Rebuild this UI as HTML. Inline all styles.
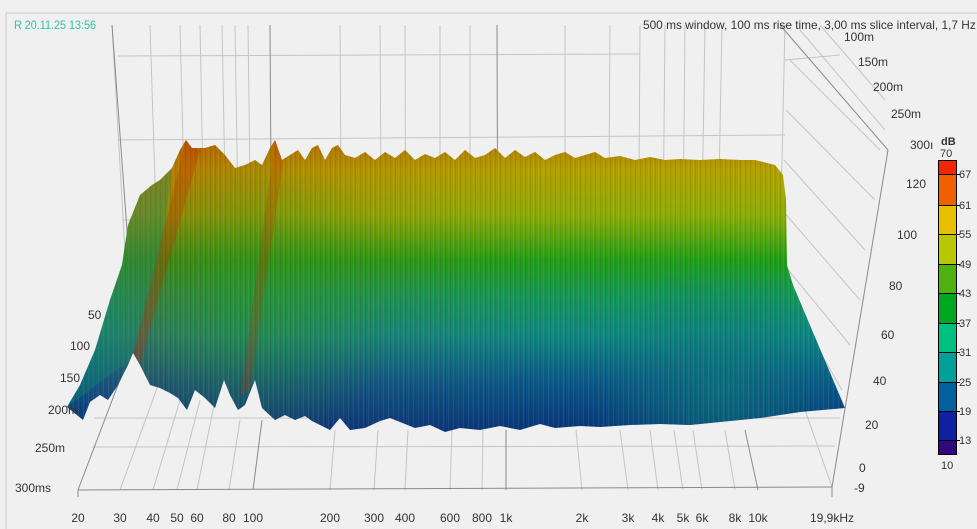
<!DOCTYPE html>
<html><head><meta charset="utf-8"><style>
html,body{margin:0;padding:0;background:#f0f0f0;}
svg{display:block;font-family:"Liberation Sans",sans-serif;}
</style></head><body>
<svg width="977" height="529" viewBox="0 0 977 529" xmlns="http://www.w3.org/2000/svg">
<defs>
<linearGradient id="v" x1="0" y1="140" x2="0" y2="440" gradientUnits="userSpaceOnUse">
<stop offset="0" stop-color="#b07a00"/>
<stop offset="0.1" stop-color="#b4a200"/>
<stop offset="0.25" stop-color="#8cae08"/>
<stop offset="0.4" stop-color="#20a018"/>
<stop offset="0.52" stop-color="#12985a"/>
<stop offset="0.65" stop-color="#0e8884"/>
<stop offset="0.8" stop-color="#0a5a8a"/>
<stop offset="1" stop-color="#08307a"/>
</linearGradient>
<linearGradient id="h" x1="60" y1="0" x2="850" y2="0" gradientUnits="userSpaceOnUse">
<stop offset="0" stop-color="#c02000" stop-opacity="0.0"/>
<stop offset="0.1" stop-color="#b83000" stop-opacity="0.4"/>
<stop offset="0.3" stop-color="#b04000" stop-opacity="0.22"/>
<stop offset="0.6" stop-color="#a06000" stop-opacity="0.05"/>
<stop offset="1" stop-color="#a06000" stop-opacity="0"/>
</linearGradient>
<linearGradient id="hv" x1="0" y1="140" x2="0" y2="440" gradientUnits="userSpaceOnUse">
<stop offset="0" stop-color="#fff" stop-opacity="1"/>
<stop offset="0.6" stop-color="#fff" stop-opacity="0.6"/>
<stop offset="1" stop-color="#fff" stop-opacity="0.2"/>
</linearGradient>
<mask id="m"><rect x="0" y="0" width="977" height="529" fill="url(#hv)"/></mask>
<radialGradient id="r" cx="720" cy="390" r="130" gradientUnits="userSpaceOnUse">
<stop offset="0" stop-color="#0f7878" stop-opacity="0.7"/>
<stop offset="1" stop-color="#0f7878" stop-opacity="0"/>
</radialGradient>
<radialGradient id="g" cx="250" cy="300" r="150" gradientUnits="userSpaceOnUse">
<stop offset="0" stop-color="#20a020" stop-opacity="0.45"/>
<stop offset="1" stop-color="#20a020" stop-opacity="0"/>
</radialGradient>
<pattern id="st" width="5" height="300" patternUnits="userSpaceOnUse">
<rect x="0" width="1" height="300" fill="#000" opacity="0.08"/>
<rect x="3" width="1" height="300" fill="#fff" opacity="0.06"/>
</pattern>
<clipPath id="c"><path d="M67,407 L80,385 L95,350 L110,300 L122,265 L128,225 L140,195 L152,185 L160,180 L172,168 L180,150 L186,140 L192,148 L205,148 L215,145 L225,155 L235,168 L245,165 L255,160 L262,165 L270,148 L275,140 L282,160 L290,155 L298,150 L305,160 L312,148 L318,145 L325,160 L332,148 L338,145 L345,155 L355,158 L365,152 L375,160 L385,152 L395,158 L405,150 L415,160 L425,154 L435,158 L445,152 L455,160 L465,150 L475,158 L485,155 L495,148 L505,158 L515,150 L525,157 L535,152 L545,160 L555,155 L565,152 L575,158 L585,155 L595,152 L605,158 L620,156 L635,160 L650,157 L665,160 L680,159 L700,160 L720,159 L740,160 L755,160 L775,165 L783,175 L786,200 L787,265 L793,285 L845,408 L800,412 L760,418 L720,422 L690,425 L660,424 L630,425 L600,427 L580,426 L555,428 L540,424 L520,430 L500,426 L480,430 L460,428 L445,432 L430,425 L415,428 L400,422 L390,418 L380,421 L365,428 L350,430 L340,418 L330,430 L312,421 L305,416 L295,420 L285,415 L275,420 L262,408 L255,380 L245,405 L238,410 L230,395 L224,380 L215,408 L205,398 L195,390 L187,410 L178,398 L170,393 L160,388 L150,385 L140,365 L133,353 L128,365 L118,385 L108,400 L100,395 L90,402 L83,420 Z"/></clipPath>
</defs>
<rect width="977" height="529" fill="#f0f0f0"/>
<line x1="6" y1="13" x2="977" y2="13" stroke="#c8c8c8"/>
<line x1="6" y1="13" x2="6" y2="529" stroke="#c8c8c8"/>
<g stroke="#c4c4c4" stroke-width="1" fill="none">
<line x1="112" y1="25" x2="130" y2="340"/>
<line x1="150" y1="25" x2="160" y2="340"/>
<line x1="180" y1="25" x2="188" y2="340"/>
<line x1="200" y1="25" x2="206" y2="340"/>
<line x1="222" y1="25" x2="228" y2="340"/>
<line x1="235" y1="25" x2="240" y2="340"/>
<line x1="248" y1="25" x2="252" y2="340"/>
<line x1="340" y1="25" x2="342" y2="340"/>
<line x1="380" y1="25" x2="382" y2="340"/>
<line x1="405" y1="25" x2="406" y2="340"/>
<line x1="440" y1="25" x2="440" y2="340"/>
<line x1="470" y1="25" x2="470" y2="340"/>
<line x1="565" y1="25" x2="565" y2="340"/>
<line x1="610" y1="25" x2="608" y2="340"/>
<line x1="640" y1="25" x2="638" y2="340"/>
<line x1="665" y1="25" x2="662" y2="340"/>
<line x1="685" y1="25" x2="682" y2="340"/>
<line x1="705" y1="25" x2="700" y2="340"/>
<line x1="722" y1="25" x2="716" y2="340"/>
<line x1="118" y1="56" x2="640" y2="54"/>
<line x1="118" y1="140" x2="785" y2="135"/>
<line x1="122" y1="220" x2="782" y2="215"/>
<line x1="125" y1="298" x2="778" y2="293"/>
<line x1="785" y1="25" x2="778" y2="340"/>
<line x1="785" y1="60" x2="840" y2="55"/>
<line x1="790" y1="60" x2="880" y2="150"/>
<line x1="786" y1="110" x2="875" y2="200"/>
<line x1="784" y1="160" x2="865" y2="250"/>
<line x1="782" y1="210" x2="860" y2="300"/>
<line x1="780" y1="260" x2="850" y2="345"/>
<line x1="790" y1="300" x2="842" y2="390"/>
<line x1="800" y1="30" x2="885" y2="130"/>
<line x1="820" y1="25" x2="885" y2="100"/>
<line x1="94" y1="418" x2="840" y2="418"/>
<line x1="92" y1="447" x2="835" y2="446"/>
<line x1="120" y1="490" x2="160" y2="380"/>
<line x1="153" y1="490" x2="180" y2="400"/>
<line x1="177" y1="490" x2="200" y2="400"/>
<line x1="197" y1="490" x2="215" y2="400"/>
<line x1="229" y1="490" x2="240" y2="420"/>
<line x1="330" y1="490" x2="335" y2="430"/>
<line x1="374" y1="490" x2="378" y2="430"/>
<line x1="405" y1="490" x2="408" y2="430"/>
<line x1="450" y1="490" x2="452" y2="430"/>
<line x1="482" y1="490" x2="483" y2="430"/>
<line x1="582" y1="490" x2="576" y2="430"/>
<line x1="628" y1="490" x2="620" y2="430"/>
<line x1="658" y1="490" x2="650" y2="430"/>
<line x1="683" y1="490" x2="674" y2="430"/>
<line x1="702" y1="490" x2="693" y2="430"/>
<line x1="735" y1="490" x2="725" y2="430"/>
<line x1="805" y1="410" x2="832" y2="487"/>
</g>
<g stroke="#8a8a8a" stroke-width="1" fill="none">
<line x1="112" y1="25" x2="135" y2="340"/>
<line x1="270" y1="25" x2="272" y2="340"/>
<line x1="497" y1="25" x2="498" y2="340"/>
<line x1="78" y1="490" x2="135" y2="340"/>
<line x1="78" y1="490" x2="832" y2="487"/>
<line x1="253" y1="490" x2="262" y2="420"/>
<line x1="506" y1="490" x2="506" y2="430"/>
<line x1="758" y1="490" x2="745" y2="430"/>
<line x1="780" y1="25" x2="888" y2="150"/>
<line x1="888" y1="150" x2="832" y2="487"/>
<line x1="832" y1="487" x2="832" y2="497"/>
<line x1="78" y1="490" x2="78" y2="497"/>
</g>
<g clip-path="url(#c)">
<rect x="50" y="130" width="810" height="320" fill="url(#v)"/>
<rect x="50" y="130" width="810" height="320" fill="url(#h)" mask="url(#m)"/>
<rect x="50" y="130" width="810" height="320" fill="url(#r)"/>
<rect x="50" y="130" width="810" height="320" fill="url(#g)"/>
<rect x="50" y="130" width="810" height="320" fill="url(#st)"/>
<path d="M67,407 L128,225 L140,195 L172,168 L160,260 L130,360 Z" fill="#10906a" opacity="0.35"/>
<path d="M186,140 L200,150 L140,365 L133,353 Z" fill="#c03000" opacity="0.3"/>
<path d="M275,140 L285,150 L250,390 L240,395 Z" fill="#c03000" opacity="0.25"/>
</g>
<g font-size="12" fill="#333">
<text x="643" y="29" textLength="340" lengthAdjust="spacingAndGlyphs">500 ms window, 100 ms rise time, 3,00 ms slice interval, 1,7 Hz r</text>
<text x="14" y="29" fill="#2ec4a0" textLength="82" lengthAdjust="spacingAndGlyphs">R 20.11.25 13:56</text>
<text x="844" y="41">100m</text>
<text x="858" y="66">150m</text>
<text x="873" y="91">200m</text>
<text x="891" y="118">250m</text>
<text x="910" y="149">300ı</text>
<text x="906" y="188">120</text>
<text x="897" y="239">100</text>
<text x="889" y="290">80</text>
<text x="881" y="339">60</text>
<text x="873" y="385">40</text>
<text x="865" y="429">20</text>
<text x="859" y="472">0</text>
<text x="854" y="492">-9</text>
<text x="88" y="319">50</text>
<text x="70" y="350">100</text>
<text x="60" y="382">150</text>
<text x="48" y="414">200m</text>
<text x="35" y="452">250m</text>
<text x="15" y="492">300ms</text>
<g text-anchor="middle">
<text x="78" y="522">20</text><text x="120" y="522">30</text><text x="153" y="522">40</text>
<text x="177" y="522">50</text><text x="197" y="522">60</text><text x="229" y="522">80</text>
<text x="253" y="522">100</text><text x="330" y="522">200</text><text x="374" y="522">300</text>
<text x="405" y="522">400</text><text x="450" y="522">600</text><text x="482" y="522">800</text>
<text x="506" y="522">1k</text><text x="582" y="522">2k</text><text x="628" y="522">3k</text>
<text x="658" y="522">4k</text><text x="683" y="522">5k</text><text x="702" y="522">6k</text>
<text x="735" y="522">8k</text><text x="758" y="522">10k</text><text x="832" y="522">19,9kHz</text>
</g>
</g>
<text x="941" y="145" font-size="11" font-weight="bold" fill="#333">dB</text>
<text x="940" y="157" font-size="11" fill="#333">70</text>
<text x="941" y="469" font-size="11" fill="#333">10</text>
<rect x="938.5" y="160" width="18" height="14" fill="#f02800"/>
<rect x="938.5" y="174" width="18" height="31" fill="#f06000"/>
<rect x="938.5" y="205" width="18" height="29" fill="#e8c000"/>
<rect x="938.5" y="234" width="18" height="30" fill="#b8c800"/>
<rect x="938.5" y="264" width="18" height="29" fill="#50b010"/>
<rect x="938.5" y="293" width="18" height="30" fill="#00a820"/>
<rect x="938.5" y="323" width="18" height="29" fill="#00c080"/>
<rect x="938.5" y="352" width="18" height="30" fill="#00a098"/>
<rect x="938.5" y="382" width="18" height="29" fill="#0060a0"/>
<rect x="938.5" y="411" width="18" height="29" fill="#1020a0"/>
<rect x="938.5" y="440" width="18" height="15" fill="#300880"/>
<g stroke="#000" stroke-width="1" fill="none">
<rect x="938.5" y="160.5" width="18" height="294"/>
<line x1="938" y1="174.5" x2="960" y2="174.5"/><line x1="938" y1="205.5" x2="960" y2="205.5"/>
<line x1="938" y1="234.5" x2="960" y2="234.5"/><line x1="938" y1="264.5" x2="960" y2="264.5"/>
<line x1="938" y1="293.5" x2="960" y2="293.5"/><line x1="938" y1="323.5" x2="960" y2="323.5"/>
<line x1="938" y1="352.5" x2="960" y2="352.5"/><line x1="938" y1="382.5" x2="960" y2="382.5"/>
<line x1="938" y1="411.5" x2="960" y2="411.5"/><line x1="938" y1="440.5" x2="960" y2="440.5"/>
</g>
<g font-size="11" fill="#333">
<text x="959" y="178">67</text><text x="959" y="209">61</text><text x="959" y="238">55</text>
<text x="959" y="268">49</text><text x="959" y="297">43</text><text x="959" y="327">37</text>
<text x="959" y="356">31</text><text x="959" y="386">25</text><text x="959" y="415">19</text>
<text x="959" y="444">13</text>
</g>
</svg>
</body></html>
